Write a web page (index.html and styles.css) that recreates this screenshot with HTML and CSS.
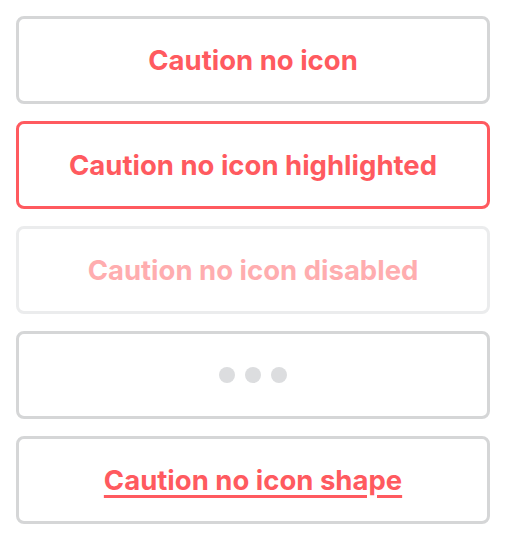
FILE: index.html
```html
<!DOCTYPE html>
<html>
<head>
<meta charset="utf-8">
<link rel="stylesheet" href="styles.css">
</head>
<body>
<div class="stack">
  <button class="btn">Caution no icon</button>
  <button class="btn btn-highlighted">Caution no icon highlighted</button>
  <button class="btn btn-disabled" disabled>Caution no icon disabled</button>
  <button class="btn btn-loading" aria-label="Loading">
    <span class="dots"><span class="dot"></span><span class="dot"></span><span class="dot"></span></span>
  </button>
  <button class="btn btn-shape">Caution no icon shape</button>
</div>
</body>
</html>
```
FILE: styles.css
```css
html, body {
  margin: 0;
  padding: 0;
  background: #ffffff;
}
.stack {
  display: flex;
  flex-direction: column;
  gap: 17px;
  padding: 16px;
}
.btn {
  box-sizing: border-box;
  height: 88px;
  width: 100%;
  border: 3px solid #d5d6d7;
  border-radius: 8px;
  background: #ffffff;
  color: #ff5a5f;
  font-family: Inter, "Noto Sans", sans-serif;
  font-weight: 700;
  font-size: 27.5px;
  display: flex;
  align-items: center;
  justify-content: center;
  padding: 0;
}
.btn-highlighted {
  border-color: #ff5a5f;
}
.btn-disabled {
  border-color: #ebeced;
  color: #ffadaf;
}
.btn-shape {
  text-decoration: underline;
  text-decoration-thickness: 3px;
  text-underline-offset: 5px;
}
.dots {
  display: flex;
  gap: 10px;
}
.dot {
  width: 16px;
  height: 16px;
  border-radius: 50%;
  background: #dcdddf;
}
```
